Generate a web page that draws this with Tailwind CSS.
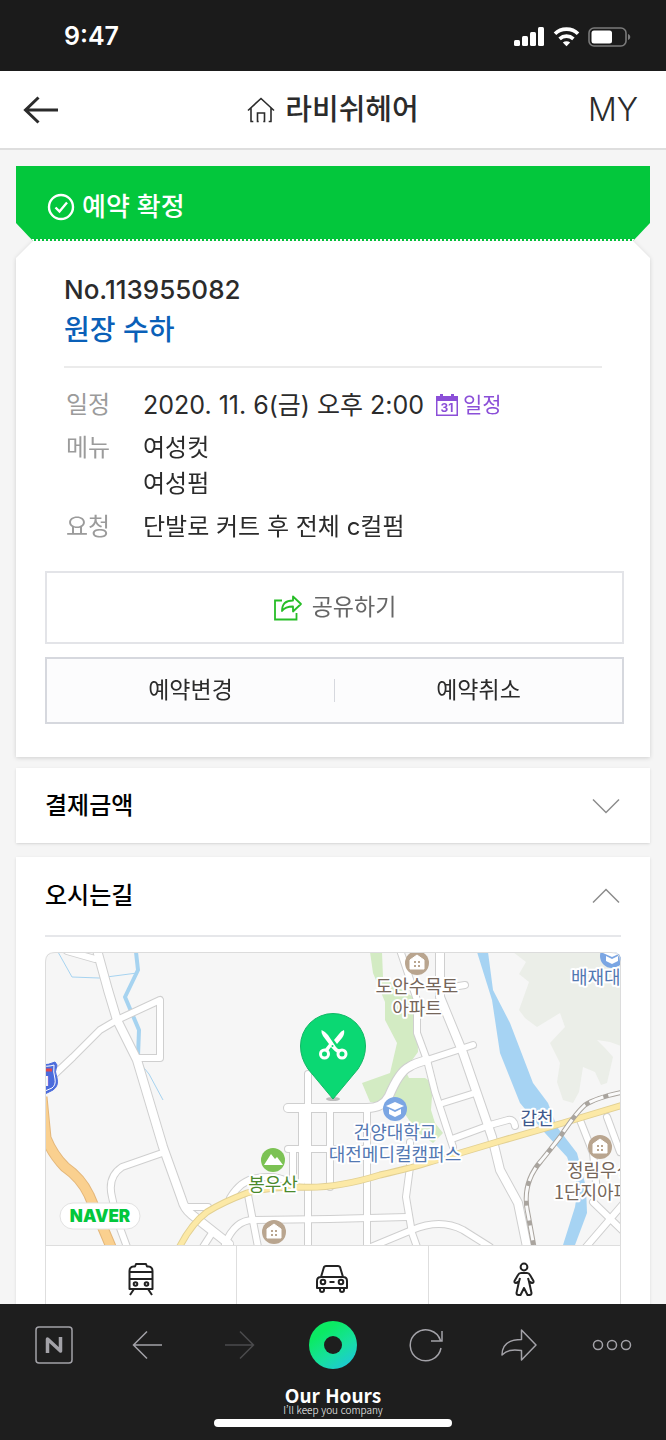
<!DOCTYPE html>
<html lang="ko">
<head>
  <meta charset="UTF-8" />
  <meta name="viewport" content="width=device-width, initial-scale=1" />
  <title>라비쉬헤어 예약</title>
  <script src="https://cdn.jsdelivr.net/npm/@tailwindcss/browser@4"></script>
</head>
<body class="flex h-screen flex-col overflow-hidden bg-[#f5f5f5] font-['Inter','Noto_Sans_CJK_KR',sans-serif] text-[#2b2b2b]">

  <!-- Status bar -->
  <div class="flex h-[71px] shrink-0 items-center justify-between bg-[#1b1b1b] pt-0.5 pr-[35px] pl-16 text-white">
    <span class="text-[25px] font-semibold">9:47</span>
    <div class="flex items-center gap-2">
      <svg class="h-[20px] w-[32px]" viewBox="0 0 32 20" fill="currentColor">
        <rect x="1" y="13" width="6" height="6" rx="1.5" />
        <rect x="9" y="9" width="6" height="10" rx="1.5" />
        <rect x="17" y="5" width="6" height="14" rx="1.5" />
        <rect x="25" y="0" width="6" height="19" rx="1.5" />
      </svg>
      <svg class="h-[20px] w-[27px]" viewBox="0 0 27 20" fill="none" stroke="currentColor" stroke-width="3.6">
        <path d="M2 6.8C8 .6 19 .6 25 6.8" />
        <path d="M6.600 11.800c4-3.600 9.800-3.600 13.800 0" />
        <path d="M13.500 19.200l-3.700-3.700c2.200-1.800 5.200-1.800 7.400 0z" fill="currentColor" stroke="none" />
      </svg>
      <svg class="h-[20px] w-[43px]" viewBox="0 0 43 20">
        <rect x="1" y="1" width="37" height="18" rx="5" fill="none" stroke="#7b7b7b" stroke-width="1.600" />
        <rect x="3.500" y="3.500" width="20.500" height="13" rx="2.500" fill="#fff" />
        <path d="M40 7v6c3-1 3-5 0-6z" fill="#7b7b7b" />
      </svg>
    </div>
  </div>

  <!-- Page header -->
  <header class="grid h-[79px] shrink-0 grid-cols-3 items-center border-b-2 border-[#dedede] bg-white px-[23px]">
    <a href="#" aria-label="뒤로">
      <svg class="h-[28px] w-[36px]" viewBox="0 0 36 28" fill="none" stroke="#2b2b2b" stroke-width="3">
        <path d="M35 14H3M15.500 1.500L2.500 14l13 12.500" />
      </svg>
    </a>
    <a href="#" class="flex items-center justify-center gap-[10px] whitespace-nowrap">
      <svg class="h-[26px] w-[28px]" viewBox="0 0 28 26" fill="none" stroke="#2b2b2b" stroke-width="1.600">
        <path d="M1 13.500L14 1.500l13 12M4 11v13.500M24 11v13.500M10.500 25v-9h7v9M3.300 24.500h3M21.700 24.500h3M9.700 24.500h2M16.300 24.500h2" />
      </svg>
      <h1 class="text-[29px] font-medium">라비쉬헤어</h1>
    </a>
    <a href="#" class="pr-[5px] text-right text-[32px] font-light">MY</a>
  </header>

  <main class="min-h-0 flex-1 overflow-hidden px-4 pt-4">

    <!-- Reservation status -->
    <div class="bg-[#03c73c] text-white [clip-path:polygon(0_0,100%_0,100%_57px,calc(100%-17px)_100%,17px_100%,0_57px)]">
      <div class="flex h-[75px] items-center gap-[7px] border-b-2 border-dotted border-white pt-2 pl-[31px]">
        <svg class="h-[28px] w-[28px]" viewBox="0 0 28 28" fill="none" stroke="currentColor" stroke-width="2.400">
          <circle cx="14" cy="14" r="12" />
          <path d="M8.500 14.500l4 4 7.500-9" />
        </svg>
        <h2 class="text-[26px] font-medium">예약 확정</h2>
      </div>
    </div>

    <!-- Reservation details -->
    <div class="drop-shadow-sm">
      <section class="bg-white pb-[33px] [clip-path:polygon(17px_0,calc(100%-17px)_0,100%_17px,100%_100%,0_100%,0_17px)]">
        <div class="mx-12 border-b-2 border-[#ebebeb] pt-[29px] pb-4">
          <p class="text-[26px]/10 font-medium">No.113955082</p>
          <p class="text-[28px]/10 font-medium text-[#0a60b8]">원장 수하</p>
        </div>

        <dl class="mx-[50px] mt-[19px] grid grid-cols-[77px_1fr] gap-y-[7px] text-2xl/9">
          <dt class="text-[#9b9b9b]">일정</dt>
          <dd class="flex items-center gap-3 whitespace-nowrap">
            <span class="text-[25px]">2020. 11. 6(금) 오후 2:00</span>
            <a href="#" class="flex items-center gap-[5px] text-[21px] text-[#8b4fd8]">
              <svg class="h-[22px] w-[22px]" viewBox="0 0 22 22">
                <path d="M0 2h4V0h3v2h8V0h3v2h4v20H0zM1.500 7v13.500h19V7z" fill="currentColor" fill-rule="evenodd" />
                <text x="11" y="18" text-anchor="middle" font-size="12" font-weight="700" fill="currentColor">31</text>
              </svg>
              일정
            </a>
          </dd>
          <dt class="text-[#9b9b9b]">메뉴</dt>
          <dd>여성컷<br />여성펌</dd>
          <dt class="text-[#9b9b9b]">요청</dt>
          <dd>단발로 커트 후 전체 c컬펌</dd>
        </dl>

        <div class="mt-[26px] mr-[26px] ml-[29px]">
          <button class="flex h-[73px] w-full items-center justify-center gap-[9px] border-2 border-[#e3e4e8] text-[23px] text-[#666]">
            <svg class="h-[26px] w-[30px]" viewBox="0 0 30 26" fill="none" stroke="#27bd27" stroke-width="1.800">
              <path d="M9 5.500H2v19h21.500V18" />
              <path d="M9 16c0-7 4-10.500 11-10.500V1.500l8 7.500-8 7.500v-5c-5 0-8.500 1-11 4.500z" stroke-linejoin="round" />
            </svg>
            공유하기
          </button>
          <div class="mt-[13px] flex h-[67px] items-center border-2 border-[#d6d8de] bg-[#fcfcfd] text-[23px]">
            <button class="h-full flex-1">예약변경</button>
            <span class="h-[23px] border-l border-[#d6d8de]"></span>
            <button class="h-full flex-1">예약취소</button>
          </div>
        </div>
      </section>
    </div>

    <!-- Payment -->
    <section class="mt-[11px] bg-white shadow">
      <button class="flex h-[75px] w-full items-center justify-between pr-[30px] pl-[29px] text-2xl font-medium text-black">
        결제금액
        <svg class="h-[16px] w-[28px]" viewBox="0 0 28 16" fill="none" stroke="#8c8c8c" stroke-width="1.500">
          <path d="M1 1.500l13 13 13-13" />
        </svg>
      </button>
    </section>

    <!-- Directions -->
    <section class="mt-[14px] bg-white px-[29px] pb-8 shadow">
      <button class="flex h-[80px] w-full items-center justify-between border-b-2 border-[#e6e7ea] pr-px text-2xl font-medium text-black">
        오시는길
        <svg class="h-[16px] w-[28px]" viewBox="0 0 28 16" fill="none" stroke="#8c8c8c" stroke-width="1.500">
          <path d="M1 14.500l13-13 13 13" />
        </svg>
      </button>

      <svg class="mt-[15px] block h-[293px] w-full rounded-t-lg" viewBox="0 0 576 293" preserveAspectRatio="xMidYMid slice" fill="none" stroke-linejoin="round">
        <defs>
          <g id="roads-wide">
            <path d="M52-2L63 38L72 68L92 108L118 195L137 248Q139 256 146 262L184 292" />
            <path d="M243 156H322Q338 156 344 144Q354 120 364 115Q370 111 382 108" />
            <path d="M395-2V45L418 101L447 185L455 218L473 251L482 295" />
          </g>
          <g id="roads">
            <path d="M22-1L50 7" />
            <path d="M10 122L28 105L55 78L72 68L115 48V106H92" />
            <path d="M120 200L77 215Q62 225 67 245L72 268L82 295" />
            <path d="M263 122V295M257 158V230M285 158V235M322 157V295" />
            <path d="M243 197H322M248 200V232" />
            <path d="M180 292Q190 268 208 268L285 267L362 265" />
            <path d="M203 243L213 295M142 255H163M167 281L158 295" />
            <path d="M185 246Q196 228 212 226Q232 223 243 230" />
            <path d="M355-2L372 48V81L382 108L390 140L408 195M382 108L428 93" />
            <path d="M398 151L430 141M407 187L445 173L463 168Q469 167 470 174" />
            <path d="M395 37L420 33" />
            <path d="M365 190V215L361 245L367 281L372 295" />
            <path d="M326 295L367 278Q395 266 418 278L445 295" />
            <path d="M535 168L548 201L552 240M562 165L575 200M548 250L578 279M578 252L541 295" />
          </g>
          <path id="highway" d="M-3 145L1 186Q8 203 20 215Q36 226 44 243L66 295" />
          <path id="avenue" d="M134 296Q146 272 162 260Q178 250 202 241Q222 235 255 235Q290 237 335 223Q370 215 385 210L452 190L518 171L578 153" />
          <path id="railway" d="M578 140Q550 146 540 153Q530 162 515 185Q505 198 496 209Q476 232 483 262L489 295" />
        </defs>

        <rect width="576" height="293" fill="#f6f6f6" />

        <!-- woods, park, river -->
        <path d="M468 0L481 10L474 22L484 30L474 58L480 66L492 75L515 61L520 75L505 91L515 111L512 130L518 148L528 151L534 140L538 115L550 120L556 133L562 131L568 105L560 96L552 88L565 90L576 94V0z" fill="#ebeee8" />
        <path d="M325 0H337L338 25L368 45L372 65L373 100L360 118L364 126L380 126L388 131L386 158L390 171L398 181L388 191L372 180L356 156L325 150L317 131L345 121L352 91L340 68L340 50L328 21z" fill="#d3ebc3" />
        <path d="M432 0H443L448 38L465 71L488 131L503 151L512 175L532 201L541 235L542 261L530 293H518L530 255L533 235L522 205L500 181L475 151L455 101L447 48z" fill="#a6d3f3" />
        <path d="M91 0L93 18L80 45L94 78L93 104" stroke="#a6d3f0" stroke-width="4" />
        <path d="M13 0L27 25L54 26L92 21M95 111L104 122L118 148" stroke="#a6d3f0" />

        <use href="#roads-wide" stroke="#cfcfcf" stroke-width="10" stroke-linecap="round" />
        <use href="#roads" stroke="#cfcfcf" stroke-width="8" stroke-linecap="round" />
        <use href="#roads-wide" stroke="#fff" stroke-width="8" stroke-linecap="round" />
        <use href="#roads" stroke="#fff" stroke-width="6" stroke-linecap="round" />
        <use href="#highway" stroke="#e3b67a" stroke-width="11" />
        <use href="#highway" stroke="#fad08f" stroke-width="9" />
        <use href="#avenue" stroke="#e2d093" stroke-width="7" />
        <use href="#avenue" stroke="#fce9a6" stroke-width="5" />
        <use href="#railway" stroke="#a9a49e" stroke-width="5" />
        <use href="#railway" stroke="#fafafa" stroke-width="3" stroke-dasharray="15 5" />

        <!-- expressway shield -->
        <path d="M-12 111L-4 113Q4 113 10 110L12 113Q9 120 12 126Q14 134 8 138L0 142L-12 138z" fill="#4a6bdc" stroke="#4a6bdc" />
        <path d="M-10 114Q4 115 9 113Q8 120 10 127Q11 133 7 136L0 139" stroke="#fff" />
        <path d="M-10 118H7" stroke="#e0474c" stroke-width="3" />
        <text x="-2" y="134" font-size="13" font-weight="700" fill="#fff">1</text>

        <!-- apartment markers -->
        <g id="apt">
          <circle cx="372" cy="11" r="12" fill="#b9a58f" />
          <path d="M365 17V8L372 3L379 8V17z" fill="#fff" stroke="#fff" />
          <path d="M369 9h2v2h-2zM373 9h2v2h-2zM369 13h2v2h-2zM373 13h2v2h-2z" fill="#b9a58f" />
        </g>
        <use href="#apt" x="183" y="184" />
        <use href="#apt" x="-143" y="269" />

        <!-- school markers -->
        <g id="school">
          <circle cx="350" cy="157" r="12" fill="#7ba6e3" />
          <path d="M341 154L350 150L359 154L350 158z" fill="#fff" />
          <path d="M344 157L350 160L356 157V162L350 165L344 162z" fill="#fff" />
        </g>
        <use href="#school" x="217" y="-153" />

        <!-- mountain marker -->
        <circle cx="228" cy="208" r="12" fill="#7cc254" />
        <path d="M219 213L226 202L230 207L232 205L238 213z" fill="#fff" />

        <g class="font-['Noto_Sans_CJK_KR',sans-serif] text-lg" stroke="#fff" stroke-width="4" paint-order="stroke" text-anchor="middle">
          <text x="372" y="41" fill="#75665a">도안수목토</text>
          <text x="372" y="63" fill="#75665a">아파트</text>
          <text x="350" y="187" fill="#5378b2">건양대학교</text>
          <text x="350" y="209" fill="#5378b2">대전메디컬캠퍼스</text>
          <text x="492" y="173" fill="#40598c">갑천</text>
          <text x="228" y="239" fill="#4b8a2c">봉우산</text>
          <g text-anchor="start">
            <text x="526" y="32" fill="#5378b2">배재대</text>
            <text x="522" y="225" fill="#75665a">정림우성</text>
            <text x="509" y="247" fill="#75665a">1단지아파트</text>
          </g>
        </g>

        <!-- shop pin -->
        <ellipse cx="288" cy="147" rx="7" ry="2" fill="#bdbdbd" />
        <path d="M288 147L263 117Q255.500 106 255.500 94A32.500 32.500 0 0 1 320.500 94Q320.500 106 313 117z" fill="#0bd873" stroke="#12b866" />
        <path d="M276.500 78Q281 80 283 83L291 95Q292 97 296 98L293 101Q290 100 286 95L283 99L280 97L284 92L278 84Q276 81 276.500 78z" fill="#fff" />
        <path d="M299 78Q300 82 297 86L292 92L289 88L294 82Q296 79 299 78z" fill="#fff" />
        <g stroke="#fff" stroke-width="3">
          <circle cx="279.500" cy="102" r="4" />
          <circle cx="297" cy="102" r="4" />
        </g>
        <circle cx="287.500" cy="94" r="1" fill="#0bd873" />

        <rect x="15" y="251" width="80" height="26" rx="13" fill="#fff" stroke="#e2e2e2" />
        <text x="55" y="270" text-anchor="middle" font-size="17" font-weight="900" fill="#03c73c">NAVER</text>

        <path d="M.5 293V10Q.5.5 10 .5H566Q575.500.5 575.500 10V293" stroke="#dcdcdc" />
      </svg>

      <div class="grid h-[66px] grid-cols-3 divide-x divide-[#dedede] border-x border-t border-[#dedede]">
        <button class="grid place-items-center" aria-label="대중교통">
          <svg class="h-[34px] w-[28px]" viewBox="0 0 28 34" fill="none" stroke="#222" stroke-width="2" stroke-linejoin="round">
            <path d="M2.500 27V9Q2.500 5 6.500 4.500H8L9 2H19L20 4.500H21.500Q25.500 5 25.500 9V27zM2.500 10H25.500M2.500 17H25.500M7 27L3 33M21 27L25 33" />
            <circle cx="8.500" cy="22" r="1.800" />
            <circle cx="19.500" cy="22" r="1.800" />
          </svg>
        </button>
        <button class="grid place-items-center" aria-label="자동차">
          <svg class="h-[30px] w-[34px]" viewBox="0 0 34 30" fill="none" stroke="#222" stroke-width="2" stroke-linejoin="round">
            <path d="M6 13L9 3Q9.500 2 11 2H23Q24.500 2 25 3L28 13zM6 13Q2 13 2 17V24H32V17Q32 13 28 13M5 24V26Q5 28 7 28T9 26V24M25 24V26Q25 28 27 28T29 26V24M14.500 18H19.500" />
            <circle cx="8" cy="18" r="2.300" />
            <circle cx="26" cy="18" r="2.300" />
          </svg>
        </button>
        <button class="grid place-items-center" aria-label="도보">
          <svg class="h-[34px] w-[22px]" viewBox="0 0 22 34" fill="none" stroke="#222" stroke-width="2" stroke-linejoin="round">
            <circle cx="11" cy="5" r="3.400" />
            <path d="M8 11H14Q16 11 17 13L20.500 19Q21 21 19 21L16 19.500L18.500 31Q18.500 33 16.500 33H14.500L11 26L7.500 33H5.500Q3.500 33 3.500 31L6 19.500L3 21Q1 21 1.500 19L5 13Q6 11 8 11zM6 19.500L7 16M16 19.500L15 16" />
          </svg>
        </button>
      </div>
    </section>
  </main>

  <!-- Browser toolbar -->
  <footer class="h-[136px] shrink-0 bg-[#1e1e1e] pt-[17px]">
    <nav class="grid h-12 grid-cols-7 place-items-center px-2 text-[#a3a2a8]">
      <button aria-label="홈">
        <svg class="h-[38px] w-[38px]" viewBox="0 0 38 38" fill="none" stroke="currentColor">
          <rect x="1" y="1" width="36" height="36" rx="3" stroke-width="1.500" />
          <path d="M12.500 27V13L25.500 25V11" stroke-width="3.500" stroke-linejoin="round" />
        </svg>
      </button>
      <button aria-label="이전">
        <svg class="h-[30px] w-[30px]" viewBox="0 0 30 30" fill="none" stroke="currentColor" stroke-width="1.500">
          <path d="M30 15H2M15 1.500L1.500 15 15 28.500" />
        </svg>
      </button>
      <button aria-label="다음" class="text-[#4b4b4d]" disabled>
        <svg class="h-[30px] w-[30px]" viewBox="0 0 30 30" fill="none" stroke="currentColor" stroke-width="1.500">
          <path d="M0 15H28M15 1.500L28.500 15 15 28.500" />
        </svg>
      </button>
      <button aria-label="그린닷" class="grid size-12 place-items-center rounded-full bg-[linear-gradient(145deg,#0bea63_25%,#17e0a0_60%,#1fc0e8)]">
        <span class="size-[18px] rounded-full bg-[#1e1e1e]"></span>
      </button>
      <button aria-label="새로고침">
        <svg class="h-[34px] w-[34px]" viewBox="0 0 34 34" fill="none" stroke="currentColor" stroke-width="1.500">
          <path d="M32 20A15.500 15.500 0 1 1 31.500 12.500M33 3V13H22" />
        </svg>
      </button>
      <button aria-label="공유">
        <svg class="h-[34px] w-[36px]" viewBox="0 0 36 34" fill="none" stroke="currentColor" stroke-width="1.500" stroke-linejoin="round">
          <path d="M1 27C1 16 9 11.500 20.500 11.500V2L35 17 20.500 32V22.500C11 21.500 6 22 1 27z" />
        </svg>
      </button>
      <button aria-label="더보기">
        <svg class="h-[12px] w-[40px]" viewBox="0 0 40 12" fill="none" stroke="currentColor" stroke-width="1.500">
          <circle cx="6" cy="6" r="4.500" />
          <circle cx="20" cy="6" r="4.500" />
          <circle cx="34" cy="6" r="4.500" />
        </svg>
      </button>
    </nav>
    <div class="mt-4 text-center font-['Noto_Sans_CJK_KR',sans-serif] text-white">
      <p class="text-[19px]/5 font-bold">Our Hours</p>
      <p class="text-[10px]/2.5 font-light">I’ll keep you company</p>
    </div>
    <div class="mx-auto mt-1 h-2 w-[238px] rounded-full bg-white"></div>
  </footer>

</body>
</html>
